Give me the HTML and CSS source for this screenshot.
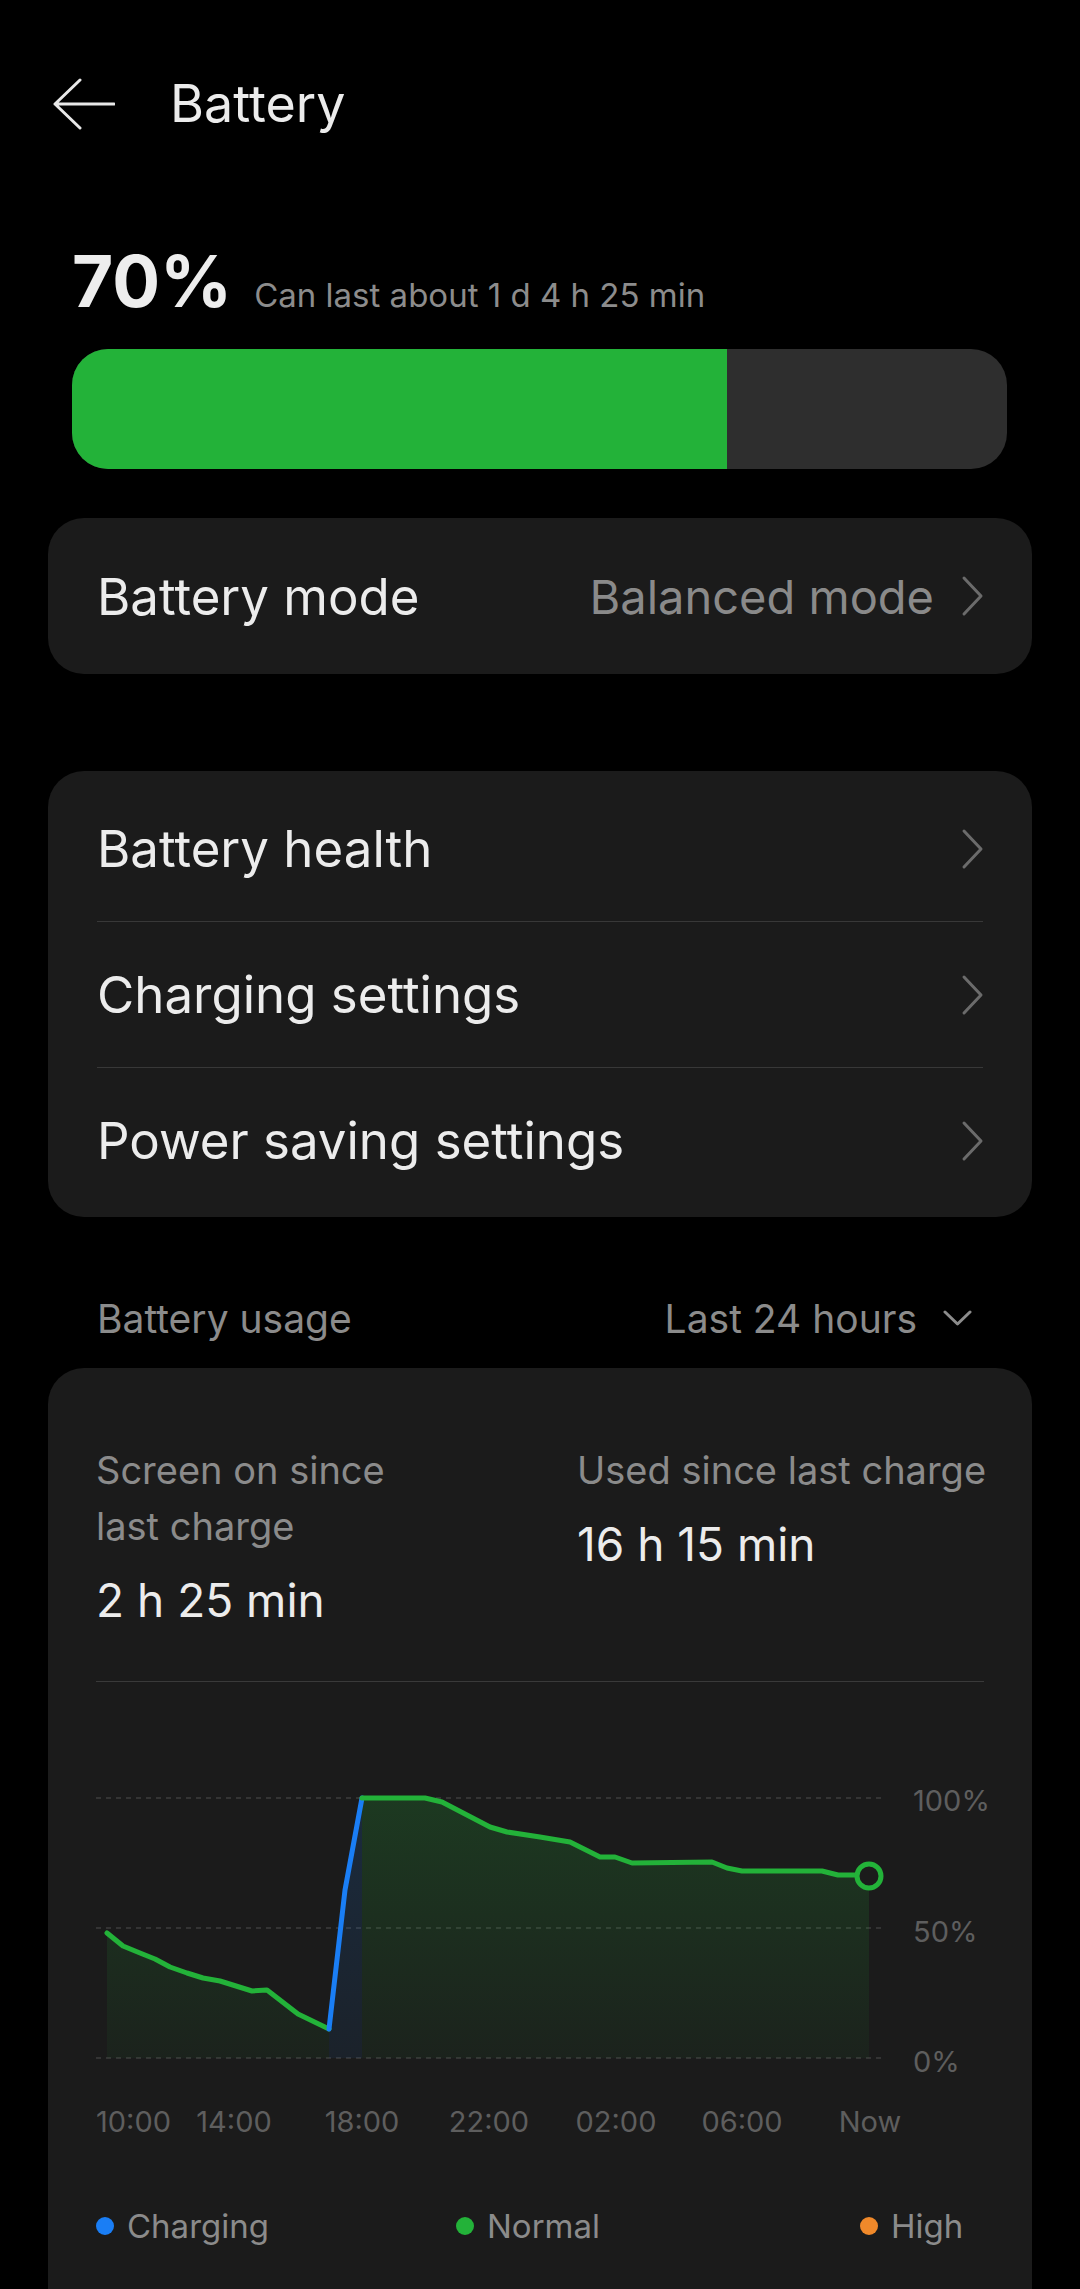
FILE: index.html
```html
<!DOCTYPE html>
<html lang="en">
  <head>
    <meta charset="UTF-8" />
    <meta name="viewport" content="width=device-width, initial-scale=1.0" />
    <title>Battery</title>
    <link rel="stylesheet" href="styles.css">
  </head>
  <body>
    <header class="topbar">
      <svg class="back" width="62" height="52" viewBox="0 0 62 52">
        <path d="M27 2 L2 26 L27 50 M2 26 H61" fill="none" stroke="#e8e8e8" stroke-width="3" stroke-linecap="round" stroke-linejoin="round" />
      </svg>
      <h1 class="title">Battery</h1>
    </header>

    <section class="summary">
      <div class="level">
        <span class="level-pct">70%</span>
        <span class="level-est">Can last about 1 d 4 h 25 min</span>
      </div>
      <div class="level-bar">
        <div class="level-fill" style="width: 70%"></div>
      </div>
    </section>

    <div class="card card-mode">
      <div class="row">
        <span class="row-label">Battery mode</span>
        <span class="row-value">Balanced mode</span>
        <svg class="chevron" width="24" height="42" viewBox="0 0 24 42">
          <path d="M3 3 L20 21 L3 39" fill="none" stroke="#6b6b6b" stroke-width="3" stroke-linecap="round" stroke-linejoin="round" />
        </svg>
      </div>
    </div>

    <div class="card card-list">
      <div class="row">
        <span class="row-label">Battery health</span>
        <svg class="chevron" width="24" height="42" viewBox="0 0 24 42">
          <path d="M3 3 L20 21 L3 39" fill="none" stroke="#6b6b6b" stroke-width="3" stroke-linecap="round" stroke-linejoin="round" />
        </svg>
      </div>
      <div class="row">
        <span class="row-label">Charging settings</span>
        <svg class="chevron" width="24" height="42" viewBox="0 0 24 42">
          <path d="M3 3 L20 21 L3 39" fill="none" stroke="#6b6b6b" stroke-width="3" stroke-linecap="round" stroke-linejoin="round" />
        </svg>
      </div>
      <div class="row">
        <span class="row-label">Power saving settings</span>
        <svg class="chevron" width="24" height="42" viewBox="0 0 24 42">
          <path d="M3 3 L20 21 L3 39" fill="none" stroke="#6b6b6b" stroke-width="3" stroke-linecap="round" stroke-linejoin="round" />
        </svg>
      </div>
    </div>

    <div class="usage-head">
      <span>Battery usage</span>
      <span class="range">
        Last 24 hours
        <svg width="29" height="18" viewBox="0 0 29 18">
          <path d="M2 3 L14.5 15 L27 3" fill="none" stroke="#8c8c8c" stroke-width="3" stroke-linecap="round" stroke-linejoin="round" />
        </svg>
      </span>
    </div>

    <div class="card card-usage">
      <div class="stats">
        <div class="stat">
          <div class="stat-label stat-label-narrow">Screen on since last charge</div>
          <div class="stat-value">2 h 25 min</div>
        </div>
        <div class="stat">
          <div class="stat-label stat-label-wide">Used since last charge</div>
          <div class="stat-value">16 h 15 min</div>
        </div>
      </div>

      <div class="divider"></div>

      <svg class="chart" width="888" height="400" viewBox="0 0 888 400">
        <defs>
          <linearGradient id="greenFill" gradientUnits="userSpaceOnUse" x1="0" y1="39" x2="0" y2="299">
            <stop offset="0" stop-color="#23b239" stop-opacity="0.2" />
            <stop offset="1" stop-color="#23b239" stop-opacity="0.05" />
          </linearGradient>
          <linearGradient id="blueFill" gradientUnits="userSpaceOnUse" x1="0" y1="39" x2="0" y2="299">
            <stop offset="0" stop-color="#1a7ef5" stop-opacity="0.16" />
            <stop offset="1" stop-color="#1a7ef5" stop-opacity="0.07" />
          </linearGradient>
        </defs>

        <g class="grid">
          <line x1="0" y1="39" x2="787" y2="39" />
          <line x1="0" y1="169" x2="787" y2="169" />
          <line x1="0" y1="299" x2="787" y2="299" />
        </g>

        <polygon fill="url(#greenFill)" points="11,174 27,187 44,194 59,200 74,208 91,214 107,219 124,222 156,232 171,231 202,255 233,270 233,299 11,299" />
        <polygon fill="url(#blueFill)" points="233,270 249,131 266,39 266,299 233,299" />
        <polygon fill="url(#greenFill)" points="266,39 329,39 346,43 394,68 411,73 444,78 474,83 504,98 519,98 536,104 616,103 631,109 646,112 726,112 742,116 759,116 773,117 773,299 266,299" />

        <polyline class="line line-green" points="11,174 27,187 44,194 59,200 74,208 91,214 107,219 124,222 156,232 171,231 202,255 233,270" />
        <polyline class="line line-blue" points="233,270 249,131 266,39" />
        <polyline class="line line-green" points="266,39 329,39 346,43 394,68 411,73 444,78 474,83 504,98 519,98 536,104 616,103 631,109 646,112 726,112 742,116 759,116 773,117" />
        <circle cx="773" cy="117" r="12" fill="#1b1b1b" stroke="#23b239" stroke-width="5" />

        <g class="axis-y">
          <text x="817" y="52">100%</text>
          <text x="817" y="183">50%</text>
          <text x="817" y="313">0%</text>
        </g>
        <g class="axis-x">
          <text x="0" y="373" class="first">10:00</text>
          <text x="138" y="373">14:00</text>
          <text x="266" y="373">18:00</text>
          <text x="393" y="373">22:00</text>
          <text x="520" y="373">02:00</text>
          <text x="646" y="373">06:00</text>
          <text x="774" y="373">Now</text>
        </g>
      </svg>

      <div class="legend">
        <span class="legend-item"><i class="dot dot-blue"></i>Charging</span>
        <span class="legend-item"><i class="dot dot-green"></i>Normal</span>
        <span class="legend-item"><i class="dot dot-orange"></i>High</span>
      </div>
    </div>
  </body>
</html>
```

FILE: styles.css
```css
body {
  margin: 0;
  background-color: #000;
  color: #ececec;
  font-family: Inter, "Noto Sans", sans-serif;
  overflow: hidden;
}

.topbar {
  display: flex;
  align-items: center;
  height: 126px;
  margin-top: 41px;
  padding-left: 53px;
}
.back {
  display: block;
}
.title {
  margin: 0 0 0 55px;
  font-size: 52px;
  font-weight: 400;
  line-height: 1;
  color: #ececec;
}

.summary {
  margin-top: 79px;
  padding: 0 73px 0 72px;
}
.level {
  display: flex;
  align-items: baseline;
  gap: 22px;
}
.level-pct {
  font-size: 71px;
  font-weight: 700;
  line-height: 1;
  color: #ededed;
}
.level-est {
  font-size: 33px;
  line-height: 1;
  color: #8c8c8c;
}
.level-bar {
  height: 120px;
  margin-top: 32px;
  border-radius: 36px;
  background-color: #2e2e2e;
  overflow: hidden;
}
.level-fill {
  height: 100%;
  background-color: #23b239;
}

.card {
  margin: 0 48px;
  background-color: #1b1b1b;
  border-radius: 36px;
}
.card-mode {
  margin-top: 49px;
}
.card-mode .row {
  height: 156px;
}
.card-list {
  margin-top: 97px;
  padding: 5px 0 4px;
}
.card-list .row {
  height: 145px;
}
.card-list .row + .row {
  border-top: 1px solid #383838;
}

.row {
  display: flex;
  align-items: center;
  margin: 0 49px;
}
.row-label {
  flex: 1;
  font-size: 51px;
  line-height: 1;
  color: #ececec;
}
.row-value {
  font-size: 47px;
  line-height: 1;
  color: #8a8a8a;
  margin-right: 27px;
}
.chevron {
  display: block;
  margin-right: -2px;
}

.usage-head {
  display: flex;
  align-items: center;
  justify-content: space-between;
  height: 100px;
  margin: 51px 108px 0 97px;
  font-size: 39px;
  line-height: 1;
  color: #8b8b8b;
}
.range {
  display: flex;
  align-items: center;
  gap: 26px;
}
.range svg {
  display: block;
}

.card-usage {
  padding: 74px 48px 120px;
  border-radius: 36px 36px 0 0;
}
.stats {
  display: grid;
  grid-template-columns: 481px 1fr;
}
.stat-label {
  font-size: 38px;
  line-height: 56px;
  color: #8b8b8b;
}
.stat-label-narrow {
  max-width: 340px;
}
.stat-label-wide {
  white-space: nowrap;
}
.stat-value {
  margin-top: 17px;
  font-size: 46px;
  line-height: 58px;
  color: #ececec;
}
.divider {
  height: 1px;
  margin-top: 52px;
  background-color: #3a3a3a;
}

.chart {
  display: block;
  margin-top: 77px;
  overflow: visible;
}
.grid line {
  stroke: #343434;
  stroke-width: 2;
  stroke-dasharray: 5 5;
}
.line {
  fill: none;
  stroke-width: 5;
  stroke-linejoin: round;
  stroke-linecap: round;
}
.line-green {
  stroke: #23b239;
}
.line-blue {
  stroke: #1a7ef5;
}
.axis-y text,
.axis-x text {
  font-family: Inter, "Noto Sans", sans-serif;
  font-size: 29px;
  fill: #5e5e5e;
}
.axis-x text {
  text-anchor: middle;
}
.axis-x text.first {
  text-anchor: start;
}

.legend {
  display: grid;
  grid-template-columns: 360px 404px auto;
  margin-top: 47px;
  font-size: 33px;
  line-height: 40px;
  color: #8b8b8b;
}
.legend-item {
  display: flex;
  align-items: center;
}
.dot {
  width: 18px;
  height: 18px;
  margin-right: 13px;
  border-radius: 50%;
}
.dot-blue {
  background-color: #1a7ef5;
}
.dot-green {
  background-color: #23b239;
}
.dot-orange {
  background-color: #f0892a;
}
```
